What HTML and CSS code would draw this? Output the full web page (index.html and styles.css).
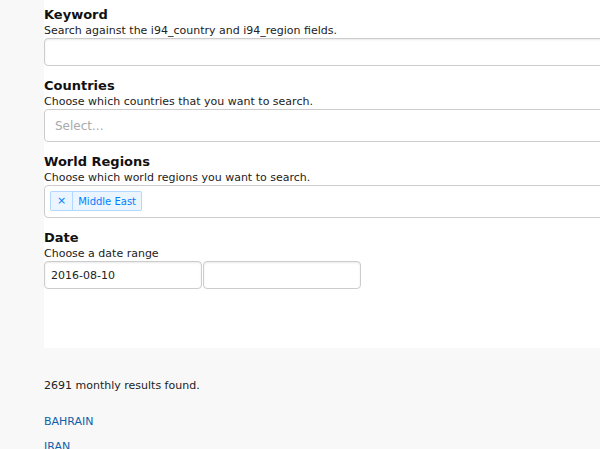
FILE: index.html
```html
<!DOCTYPE html>
<html>
<head>
<meta charset="utf-8">
<link rel="stylesheet" href="styles.css">
</head>
<body>
<div class="page">
  <form class="panel">
    <div class="field first">
      <h3 class="label">Keyword</h3>
      <p class="help">Search against the i94_country and i94_region fields.</p>
      <input class="text-input" type="text">
    </div>
    <div class="field">
      <h3 class="label">Countries</h3>
      <p class="help">Choose which countries that you want to search.</p>
      <div class="select">
        <span class="placeholder">Select...</span>
      </div>
    </div>
    <div class="field">
      <h3 class="label">World Regions</h3>
      <p class="help">Choose which world regions you want to search.</p>
      <div class="select multi">
        <span class="tag"><span class="tag-remove">×</span><span class="tag-label">Middle East</span></span>
      </div>
    </div>
    <div class="field">
      <h3 class="label">Date</h3>
      <p class="help">Choose a date range</p>
      <div class="date-range">
        <input class="date-input" type="text" value="2016-08-10">
        <input class="date-input" type="text">
      </div>
    </div>
  </form>
  <p class="count">2691 monthly results found.</p>
  <ul class="results">
    <li><a href="#">BAHRAIN</a></li>
    <li><a href="#">IRAN</a></li>
  </ul>
</div>
</body>
</html>
```

FILE: styles.css
```css
html, body {
  margin: 0;
  padding: 0;
  background: #f8f8f8;
  overflow: hidden;
}
body {
  font-family: "DejaVu Sans", Verdana, sans-serif;
  font-size: 11px;
  color: #222;
}
.page {
  padding-left: 44px;
}
.panel {
  background: #fff;
  width: 700px;
  padding: 7px 0 59px 0;
}
.field {
  margin-top: 12px;
}
.field.first {
  margin-top: 0;
}
.label {
  margin: 0;
  font-size: 13px;
  line-height: 16px;
  font-weight: bold;
  color: #111;
}
.help {
  margin: 0;
  font-size: 11px;
  line-height: 15px;
  color: #222;
}
.text-input {
  display: block;
  box-sizing: border-box;
  width: 700px;
  height: 28px;
  margin: 0;
  border: 1px solid #ccc;
  border-radius: 4px;
  box-shadow: inset 0 1px 2px rgba(0,0,0,0.09);
  background: #fff;
  font-family: inherit;
  font-size: 11px;
  padding: 0 6px;
}
.select {
  box-sizing: border-box;
  width: 700px;
  height: 33px;
  border: 1px solid #ccc;
  border-radius: 4px;
  background: #fff;
  display: flex;
  align-items: center;
  padding-left: 10px;
}
.placeholder {
  color: #aaa;
  font-size: 12px;
}
.select.multi {
  align-items: flex-start;
  padding: 5px 0 0 5px;
}
.tag {
  display: inline-flex;
  align-items: stretch;
  box-sizing: border-box;
  height: 20px;
  border: 1px solid rgba(0,126,255,0.24);
  background: rgba(0,126,255,0.08);
  border-radius: 2px;
  color: #007eff;
  font-size: 10px;
}
.tag-remove {
  display: flex;
  align-items: center;
  padding: 0 6px 1px 6px;
  border-right: 1px solid rgba(0,126,255,0.24);
  font-size: 11px;
}
.tag-label {
  display: flex;
  align-items: center;
  padding: 0 5px 0 5px;
}
.date-range {
  display: flex;
  gap: 1px;
}
.date-input {
  box-sizing: border-box;
  width: 158px;
  height: 28px;
  margin: 0;
  border: 1px solid #ccc;
  border-radius: 4px;
  box-shadow: inset 0 1px 2px rgba(0,0,0,0.09);
  background: #fff;
  font-family: inherit;
  font-size: 11px;
  color: #222;
  padding: 0 6px;
}
.count {
  margin: 30px 0 0 0;
  line-height: 15px;
  color: #222;
}
.results {
  list-style: none;
  margin: 21px 0 0 0;
  padding: 0;
}
.results li {
  line-height: 15px;
  margin-bottom: 10px;
}
.results a {
  color: #125fa8;
  text-decoration: none;
}
```
